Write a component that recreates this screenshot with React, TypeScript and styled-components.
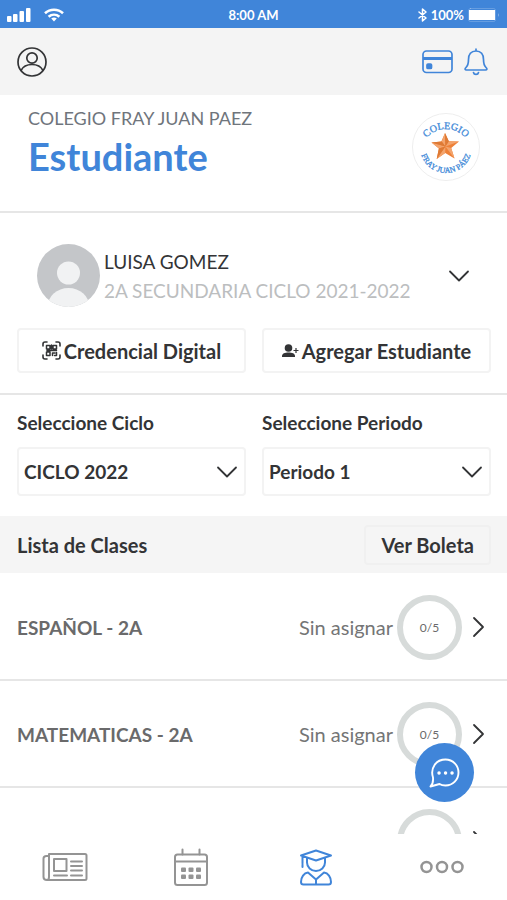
import React from "react";
import styled, { createGlobalStyle } from "styled-components";

const blue = "#4085d9";
const ink = "#333436";
const line = "#e6e6e6";

const GlobalStyle = createGlobalStyle`
  * { box-sizing: border-box; }
  body { margin: 0; background: #fff; }
  body, button, select { font-family: Lato, "Open Sans", sans-serif; color: ${ink}; }
  h1, h2, p, ul { margin: 0; padding: 0; }
  svg { display: block; flex: none; }
`;

const Screen = styled.div`
  display: flex;
  flex-direction: column;
  height: 100vh;
  overflow: hidden;
`;

const StatusBar = styled.div`
  display: grid;
  grid-template-columns: 1fr auto 1fr;
  align-items: center;
  flex: none;
  height: 28px;
  padding: 2px 7px 0 7px;
  background: ${blue};
  color: #fff;
  font-size: 13px;
  font-weight: 700;
`;

const StatusGroup = styled.div<{ $end?: boolean }>`
  display: flex;
  align-items: center;
  justify-content: ${(p) => (p.$end ? "flex-end" : "flex-start")};
  gap: ${(p) => (p.$end ? "4px" : "13px")};
`;

const TopBar = styled.header`
  display: flex;
  align-items: center;
  justify-content: space-between;
  flex: none;
  height: 67px;
  padding: 0 19px 0 16px;
  background: #f4f4f4;
`;

const TopActions = styled.div`
  display: flex;
  align-items: center;
  gap: 11px;
`;

const IconButton = styled.button`
  display: flex;
  padding: 0;
  border: 0;
  background: none;
  color: ${ink};
  cursor: pointer;
`;

const BlueIconButton = styled(IconButton)`
  color: ${blue};
`;

const TitleSection = styled.section`
  display: flex;
  justify-content: space-between;
  flex: none;
  height: 118px;
  padding: 10px 27px 0 28px;
  border-bottom: 2px solid ${line};
`;

const School = styled.p`
  font-size: 18px;
  line-height: 26px;
  color: #6f757c;
`;

const Title = styled.h1`
  font-size: 38px;
  line-height: 50px;
  font-weight: 700;
  color: ${blue};
`;

const LogoFrame = styled.div`
  padding-top: 8px;
`;

const StudentSection = styled.section`
  flex: none;
  padding: 31px 16px 20px 17px;
  border-bottom: 2px solid ${line};
`;

const Student = styled.div`
  display: flex;
  align-items: center;
  padding: 0 21px 0 20px;
`;

const StudentText = styled.div`
  flex: 1;
  padding-left: 4px;
  white-space: nowrap;
`;

const StudentName = styled.h2`
  font-size: 19px;
  line-height: 29px;
  font-weight: 400;
`;

const StudentGroup = styled.p`
  font-size: 19px;
  line-height: 29px;
  color: #bcbebf;
`;

const TwoColumns = styled.div`
  display: grid;
  grid-template-columns: 1fr 1fr;
  gap: 16px;
`;

const ButtonColumns = styled(TwoColumns)`
  margin-top: 21px;
`;

const OutlineButton = styled.button`
  display: flex;
  align-items: center;
  justify-content: center;
  gap: 3px;
  height: 45px;
  padding: 0;
  border: 2px solid #f3f3f3;
  border-radius: 4px;
  background: #fff;
  font-size: 20px;
  font-weight: 700;
  white-space: nowrap;
  cursor: pointer;
`;

const Filters = styled(TwoColumns)`
  flex: none;
  padding: 14px 16px 20px 17px;
`;

const Field = styled.div`
  display: flex;
  flex-direction: column;
  gap: 10px;
`;

const FieldLabel = styled.label`
  font-size: 19px;
  line-height: 28px;
  font-weight: 700;
`;

const SelectFrame = styled.div`
  display: grid;
  align-items: center;
  & > * { grid-area: 1 / 1; }
  & > svg {
    justify-self: end;
    margin-right: 8px;
    pointer-events: none;
  }
`;

const Select = styled.select`
  appearance: none;
  width: 100%;
  height: 49px;
  padding: 0 36px 0 5px;
  border: 2px solid #f3f3f3;
  border-radius: 4px;
  background: #fff;
  font-size: 19px;
  font-weight: 700;
`;

const ListHeader = styled.div`
  display: flex;
  align-items: center;
  justify-content: space-between;
  flex: none;
  height: 57px;
  padding: 0 16px 0 17px;
  background: #f5f5f5;
`;

const ListTitle = styled.h2`
  font-size: 20px;
  line-height: 28px;
  font-weight: 700;
`;

const GradesButton = styled(OutlineButton)`
  height: 40px;
  padding: 0 15px;
  border-color: #f0f0f0;
  background: transparent;
`;

const ListArea = styled.main`
  position: relative;
  flex: 1;
  min-height: 0;
`;

const ClassList = styled.ul`
  height: 100%;
  overflow: hidden;
  list-style: none;
`;

const ClassRow = styled.li`
  border-bottom: 2px solid ${line};
  &:first-child { padding-top: 1px; }
`;

const ClassButton = styled.button`
  display: flex;
  align-items: center;
  width: 100%;
  height: 105px;
  padding: 1px 22px 0 17px;
  border: 0;
  background: none;
  text-align: left;
  cursor: pointer;
`;

const ClassName = styled.span`
  flex: 1;
  font-size: 19px;
  font-weight: 700;
  color: #6a6a6b;
`;

const ClassStatus = styled.span`
  margin-right: 4px;
  font-size: 20px;
  color: #747576;
`;

const Ring = styled.span`
  display: flex;
  align-items: center;
  justify-content: center;
  width: 65px;
  height: 65px;
  margin-right: 10px;
  border: 6px solid #d7dbda;
  border-radius: 50%;
  font-size: 12px;
  color: #6a6a6b;
`;

const ChatButton = styled.button`
  position: absolute;
  right: 33px;
  bottom: 32px;
  display: flex;
  align-items: center;
  justify-content: center;
  width: 59px;
  height: 59px;
  padding: 0;
  border: 0;
  border-radius: 50%;
  background: ${blue};
  color: #fff;
  cursor: pointer;
`;

const BottomNav = styled.nav`
  display: grid;
  grid-template-columns: repeat(4, 1fr);
  flex: none;
  height: 66px;
  padding: 0 2px;
`;

const NavLink = styled.a<{ $active?: boolean }>`
  display: flex;
  align-items: center;
  justify-content: center;
  color: ${(p) => (p.$active ? blue : "#949494")};
`;

type IconProps = { width: number; height: number; stroke?: number; children: React.ReactNode };

const Icon = ({ width, height, stroke = 2, children }: IconProps) => (
  <svg
    width={width}
    height={height}
    viewBox={`0 0 ${width} ${height}`}
    fill="none"
    stroke="currentColor"
    strokeWidth={stroke}
    strokeLinecap="round"
    strokeLinejoin="round"
    aria-hidden="true"
  >
    {children}
  </svg>
);

const ChevronDown = () => (
  <Icon width={22} height={14} stroke={1.8}>
    <path d="M2 2.500l9 9 9-9" />
  </Icon>
);

const ChevronRight = () => (
  <Icon width={13} height={22} stroke={1.8}>
    <path d="M2 2l9 9-9 9" />
  </Icon>
);

const SignalIcon = () => (
  <Icon width={24} height={14} stroke={0}>
    <g fill="currentColor">
      <rect x="0" y="8" width="4.500" height="6" rx="1" />
      <rect x="6" y="6" width="4.500" height="8" rx="1" />
      <rect x="12.500" y="3" width="4.500" height="11" rx="1" />
      <rect x="19" y="0" width="4.500" height="14" rx="1" />
    </g>
  </Icon>
);

const WifiIcon = () => (
  <Icon width={20} height={14} stroke={2.6}>
    <g strokeLinecap="butt">
      <path d="M1 5.2c5-4.6 13-4.6 18 0" />
      <path d="M4.600 8.800c3.200-2.800 7.600-2.800 10.800 0" />
    </g>
    <path d="M7.200 10.600q2.800-2 5.600 0L10 13.600z" fill="currentColor" stroke="none" />
  </Icon>
);

const BluetoothIcon = () => (
  <Icon width={9} height={14} stroke={1.500}>
    <path d="M1 4l7 6-3.500 3V1L8 4l-7 6" />
  </Icon>
);

const BatteryIcon = () => (
  <Icon width={32} height={15} stroke={1}>
    <rect x="0.5" y="0.5" width="27" height="13" rx="2" opacity="0.2" />
    <rect x="1" y="2" width="26" height="10" fill="currentColor" stroke="none" />
    <path d="M30 5v4q1.500-2 0-4z" fill="currentColor" stroke="none" opacity="0.5" />
  </Icon>
);

const UserIcon = () => (
  <Icon width={32} height={32} stroke={1.7}>
    <circle cx="16" cy="16" r="14" />
    <circle cx="16" cy="12" r="5.200" />
    <path d="M5 24.500c2-4 6-6 11-6s9 2 11 6" />
  </Icon>
);

const CardIcon = () => (
  <Icon width={31} height={24} stroke={1.700}>
    <rect x="1" y="1" width="29" height="21.500" rx="3.500" />
    <path d="M1 8.500h29" strokeWidth="3" strokeLinecap="butt" />
    <rect x="5" y="14" width="4.500" height="4.500" rx="1" fill="currentColor" />
  </Icon>
);

const BellIcon = () => (
  <Icon width={24} height={28} stroke={1.700}>
    <path d="M12 1.200v1.500M12 3c-5 0-7.500 3.500-7.500 8.500 0 4-.5 6-2.500 8-1.500 1.500-1 2.500.5 2.500h19c1.500 0 2-1 .5-2.500-2-2-2.500-4-2.500-8C19.500 6.500 17 3 12 3z" />
    <path d="M9.500 24.500c.5 2.500 4.500 2.500 5 0" />
  </Icon>
);

const SchoolLogo = () => (
  <svg width="68" height="68" viewBox="0 0 68 68" role="img" aria-label="Colegio Fray Juan Páez">
    <defs>
      <path id="logo-top" d="M8 42a26 26 0 0 1 52 0" />
      <path id="logo-bottom" d="M8 34a26 26 0 0 0 52 0" />
    </defs>
    <circle cx="34" cy="34" r="33.500" fill="#fff" stroke="#eeeeee" />
    <g fontFamily="Liberation Serif, serif" fill="#3e89d8" stroke="#3e89d8" strokeWidth="0.300" textAnchor="middle">
      <text fontSize="10"><textPath href="#logo-top" startOffset="50%">COLEGIO</textPath></text>
      <text fontSize="8"><textPath href="#logo-bottom" startOffset="50%">FRAY JUAN PÁEZ</textPath></text>
    </g>
    <path d="M33 20l3.800 8.300 10.200.2-7.800 6.500 3.300 10.500-9.300-5.500-8.500 6 2.200-10.500-7.400-6 9.800-1z" fill="#ee8138" />
    <path d="M33 20l.4 13.500-3.700-5zM47 28.500l-13.600 5 3.400-5.200zM42.500 45.500l-9.100-12 5.800 1.500zM24.700 46l8.700-12.500-.2 6.500zM19.500 29.500l13.900 4-6.500 2z" fill="#f3a46d" />
    <path d="M33 20l.4 13.500 3.400-5.200zM19.500 29.500l13.900 4-3.700-5zM24.700 46l8.700-12.500-6.500 2z" fill="#de7a35" />
  </svg>
);

const Avatar = () => (
  <svg width="63" height="63" viewBox="0 0 63 63" aria-hidden="true">
    <clipPath id="avatar-clip"><circle cx="31.500" cy="31.500" r="31.500" /></clipPath>
    <g clipPath="url(#avatar-clip)">
      <rect width="63" height="63" fill="#c4c6c9" />
      <circle cx="31.500" cy="29" r="11.500" fill="#f1f2f3" />
      <ellipse cx="31.500" cy="63" rx="21" ry="19" fill="#f1f2f3" />
    </g>
  </svg>
);

const QrIcon = () => (
  <Icon width={19} height={19} stroke={1.600}>
    <path d="M1 5V3q0-2 2-2h2M14 1h2q2 0 2 2v2M18 14v2q0 2-2 2h-2M5 18H3q-2 0-2-2v-2" />
    <path d="M4.500 4.500h3.500v3.500H4.500zM11 4.500h3.500v3.500H11zM4.500 11h3.500v3.500H4.500zM9.500 4v4M5 9.500h9.500M10.500 14.500v-2.500h2.500M14.500 11.500v3h-2" strokeWidth="1.500" />
  </Icon>
);

const UserPlusIcon = () => (
  <Icon width={17} height={14} stroke={1.200}>
    <circle cx="6.500" cy="4" r="3.800" fill="currentColor" stroke="none" />
    <path d="M0 13v-1c0-2.500 3-3.500 6.500-3.500S13 9.500 13 12v1z" fill="currentColor" stroke="none" />
    <path d="M14 4v5M11.500 6.500h5" strokeLinecap="butt" />
  </Icon>
);

const ChatIcon = () => (
  <Icon width={32} height={32} stroke={1.900}>
    <path d="M4 20.500C1 11 7 2.500 16.500 2.500c7.500 0 13 6 13 13s-5.500 13-13 13c-2.500 0-4.500-.5-6-1.500L1.500 29.500q3-3 2.500-9z" />
    <path d="M10 16h.1M16.500 16h.1M23 16h.1" strokeWidth="3.400" />
  </Icon>
);

const NewsIcon = () => (
  <Icon width={46} height={30}>
    <path d="M7 2h36q1.500 0 1.500 1.500v23q0 1.500-1.500 1.500H5q-3.500 0-3.500-3V6.500Q1.500 4 4.500 4H7M7 2v23q0 3-2 3" />
    <path d="M12 7h12.500v12H12zM12 23.500h13M29 9.500h11M29 14h11M29 18.500h11M29 23.500h11" />
  </Icon>
);

const CalendarIcon = () => (
  <Icon width={36} height={39}>
    <rect x="2" y="6.500" width="32" height="30.500" rx="2.500" />
    <path d="M2 13.500h32M9.500 1.500v5M26.500 1.500v5" />
    <g fill="currentColor" stroke="none">
      {[8, 15.500, 23].map((x) => (
        <g key={x}>
          <rect x={x} y="19.500" width="5" height="4.500" rx="1" />
          <rect x={x} y="26.500" width="5" height="4.500" rx="1" />
        </g>
      ))}
    </g>
  </Icon>
);

const StudentIcon = () => (
  <Icon width={34} height={37}>
    <path d="M17 1.500l15 5-15 5-15-5zM3.500 7.500v7M3.500 15.500v2.500" />
    <path d="M8 9v4.500a9 8.500 0 0 0 18 0V9" />
    <path d="M17 35.500H4.500Q2 35.500 2 33c0-5 3-9 7-9.500l8 7 8-7c4 .5 7 4.500 7 9.500q0 2.500-2.500 2.500H17v-5" />
  </Icon>
);

const MoreIcon = () => (
  <Icon width={44} height={14} stroke={2.500}>
    <circle cx="6.500" cy="7" r="5" />
    <circle cx="22" cy="7" r="5" />
    <circle cx="37.500" cy="7" r="5" />
  </Icon>
);

const classes = [
  { name: "ESPAÑOL - 2A", progress: "0/5" },
  { name: "MATEMATICAS - 2A", progress: "0/5" },
  { name: "", progress: "" },
];

export default function App() {
  return (
    <Screen>
      <GlobalStyle />
      <StatusBar>
        <StatusGroup>
          <SignalIcon />
          <WifiIcon />
        </StatusGroup>
        <span>8:00 AM</span>
        <StatusGroup $end>
          <BluetoothIcon />
          <span>100%</span>
          <BatteryIcon />
        </StatusGroup>
      </StatusBar>

      <TopBar>
        <IconButton aria-label="Perfil"><UserIcon /></IconButton>
        <TopActions>
          <BlueIconButton aria-label="Pagos"><CardIcon /></BlueIconButton>
          <BlueIconButton aria-label="Notificaciones"><BellIcon /></BlueIconButton>
        </TopActions>
      </TopBar>

      <TitleSection>
        <div>
          <School>COLEGIO FRAY JUAN PAEZ</School>
          <Title>Estudiante</Title>
        </div>
        <LogoFrame><SchoolLogo /></LogoFrame>
      </TitleSection>

      <StudentSection>
        <Student>
          <Avatar />
          <StudentText>
            <StudentName>LUISA GOMEZ</StudentName>
            <StudentGroup>2A SECUNDARIA CICLO 2021-2022</StudentGroup>
          </StudentText>
          <IconButton aria-label="Cambiar estudiante"><ChevronDown /></IconButton>
        </Student>
        <ButtonColumns>
          <OutlineButton><QrIcon />Credencial Digital</OutlineButton>
          <OutlineButton><UserPlusIcon />Agregar Estudiante</OutlineButton>
        </ButtonColumns>
      </StudentSection>

      <Filters>
        <Field>
          <FieldLabel htmlFor="ciclo">Seleccione Ciclo</FieldLabel>
          <SelectFrame>
            <Select id="ciclo"><option>CICLO 2022</option></Select>
            <ChevronDown />
          </SelectFrame>
        </Field>
        <Field>
          <FieldLabel htmlFor="periodo">Seleccione Periodo</FieldLabel>
          <SelectFrame>
            <Select id="periodo"><option>Periodo 1</option></Select>
            <ChevronDown />
          </SelectFrame>
        </Field>
      </Filters>

      <ListHeader>
        <ListTitle>Lista de Clases</ListTitle>
        <GradesButton>Ver Boleta</GradesButton>
      </ListHeader>

      <ListArea>
        <ClassList>
          {classes.map((item, index) => (
            <ClassRow key={index}>
              <ClassButton>
                <ClassName>{item.name}</ClassName>
                {item.name && <ClassStatus>Sin asignar</ClassStatus>}
                <Ring>{item.progress}</Ring>
                <ChevronRight />
              </ClassButton>
            </ClassRow>
          ))}
        </ClassList>
        <ChatButton aria-label="Mensajes"><ChatIcon /></ChatButton>
      </ListArea>

      <BottomNav>
        <NavLink href="#noticias" aria-label="Noticias"><NewsIcon /></NavLink>
        <NavLink href="#calendario" aria-label="Calendario"><CalendarIcon /></NavLink>
        <NavLink href="#estudiante" aria-label="Estudiante" $active><StudentIcon /></NavLink>
        <NavLink href="#mas" aria-label="Más"><MoreIcon /></NavLink>
      </BottomNav>
    </Screen>
  );
}
